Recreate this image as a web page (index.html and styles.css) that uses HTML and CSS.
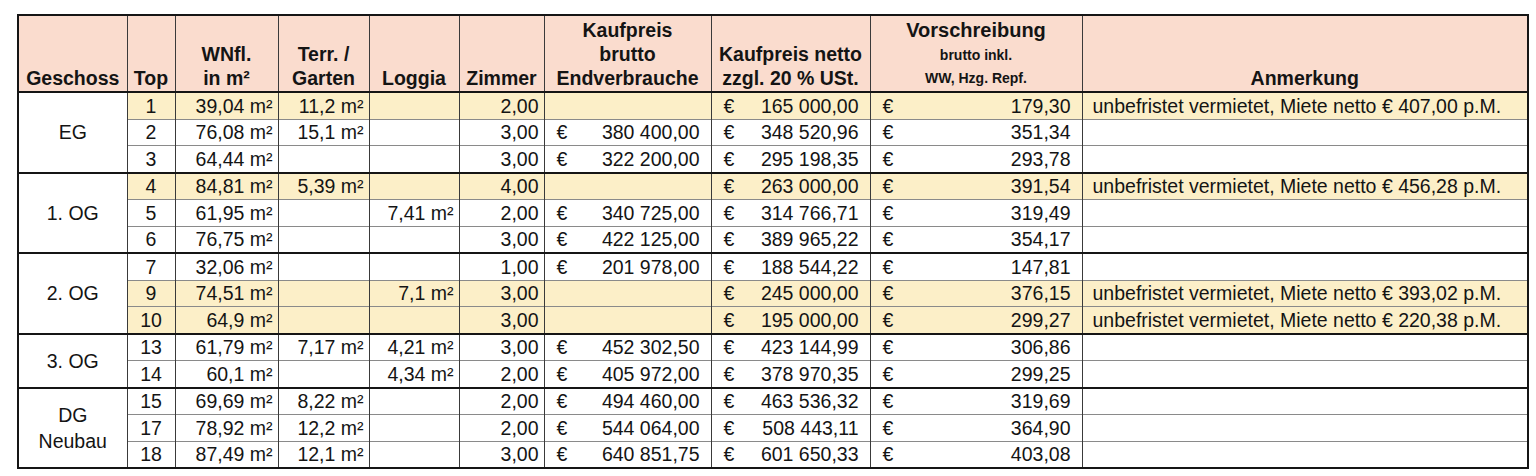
FILE: index.html
```html
<!DOCTYPE html>
<html lang="de">
<head>
<meta charset="utf-8">
<title>Preisliste</title>
<link rel="stylesheet" href="styles.css">
</head>
<body>
<table class="sheet">
  <colgroup>
    <col class="c-floor"><col class="c-top"><col class="c-area"><col class="c-terr"><col class="c-log"><col class="c-rooms"><col class="c-brutto"><col class="c-netto"><col class="c-vor"><col class="c-note">
  </colgroup>
  <thead>
    <tr class="head">
      <th>Geschoss</th>
      <th>Top</th>
      <th>WNfl.<br>in m²</th>
      <th>Terr. /<br>Garten</th>
      <th>Loggia</th>
      <th>Zimmer</th>
      <th>Kaufpreis<br>brutto<br>Endverbrauche</th>
      <th>Kaufpreis netto<br>zzgl. 20 % USt.</th>
      <th class="vor"><span class="big">Vorschreibung</span><span class="small">brutto inkl.</span><span class="small">WW, Hzg. Repf.</span></th>
      <th>Anmerkung</th>
    </tr>
  </thead>
  <tbody class="grp">
    <tr class="hl">
      <td class="floor" rowspan="3">EG</td>
      <td class="top">1</td><td class="num">39,04 m²</td><td class="num">11,2 m²</td><td class="num"></td><td class="num">2,00</td>
      <td></td>
      <td><div class="acc"><span>€</span><span>165 000,00</span></div></td>
      <td><div class="acc"><span>€</span><span>179,30</span></div></td>
      <td class="note">unbefristet vermietet, Miete netto € 407,00 p.M.</td>
    </tr>
    <tr>
      <td class="top">2</td><td class="num">76,08 m²</td><td class="num">15,1 m²</td><td class="num"></td><td class="num">3,00</td>
      <td><div class="acc"><span>€</span><span>380 400,00</span></div></td>
      <td><div class="acc"><span>€</span><span>348 520,96</span></div></td>
      <td><div class="acc"><span>€</span><span>351,34</span></div></td>
      <td class="note"></td>
    </tr>
    <tr>
      <td class="top">3</td><td class="num">64,44 m²</td><td class="num"></td><td class="num"></td><td class="num">3,00</td>
      <td><div class="acc"><span>€</span><span>322 200,00</span></div></td>
      <td><div class="acc"><span>€</span><span>295 198,35</span></div></td>
      <td><div class="acc"><span>€</span><span>293,78</span></div></td>
      <td class="note"></td>
    </tr>
  </tbody>
  <tbody class="grp">
    <tr class="hl">
      <td class="floor" rowspan="3">1. OG</td>
      <td class="top">4</td><td class="num">84,81 m²</td><td class="num">5,39 m²</td><td class="num"></td><td class="num">4,00</td>
      <td></td>
      <td><div class="acc"><span>€</span><span>263 000,00</span></div></td>
      <td><div class="acc"><span>€</span><span>391,54</span></div></td>
      <td class="note">unbefristet vermietet, Miete netto € 456,28 p.M.</td>
    </tr>
    <tr>
      <td class="top">5</td><td class="num">61,95 m²</td><td class="num"></td><td class="num">7,41 m²</td><td class="num">2,00</td>
      <td><div class="acc"><span>€</span><span>340 725,00</span></div></td>
      <td><div class="acc"><span>€</span><span>314 766,71</span></div></td>
      <td><div class="acc"><span>€</span><span>319,49</span></div></td>
      <td class="note"></td>
    </tr>
    <tr>
      <td class="top">6</td><td class="num">76,75 m²</td><td class="num"></td><td class="num"></td><td class="num">3,00</td>
      <td><div class="acc"><span>€</span><span>422 125,00</span></div></td>
      <td><div class="acc"><span>€</span><span>389 965,22</span></div></td>
      <td><div class="acc"><span>€</span><span>354,17</span></div></td>
      <td class="note"></td>
    </tr>
  </tbody>
  <tbody class="grp">
    <tr>
      <td class="floor" rowspan="3">2. OG</td>
      <td class="top">7</td><td class="num">32,06 m²</td><td class="num"></td><td class="num"></td><td class="num">1,00</td>
      <td><div class="acc"><span>€</span><span>201 978,00</span></div></td>
      <td><div class="acc"><span>€</span><span>188 544,22</span></div></td>
      <td><div class="acc"><span>€</span><span>147,81</span></div></td>
      <td class="note"></td>
    </tr>
    <tr class="hl">
      <td class="top">9</td><td class="num">74,51 m²</td><td class="num"></td><td class="num">7,1 m²</td><td class="num">3,00</td>
      <td></td>
      <td><div class="acc"><span>€</span><span>245 000,00</span></div></td>
      <td><div class="acc"><span>€</span><span>376,15</span></div></td>
      <td class="note">unbefristet vermietet, Miete netto € 393,02 p.M.</td>
    </tr>
    <tr class="hl">
      <td class="top">10</td><td class="num">64,9 m²</td><td class="num"></td><td class="num"></td><td class="num">3,00</td>
      <td></td>
      <td><div class="acc"><span>€</span><span>195 000,00</span></div></td>
      <td><div class="acc"><span>€</span><span>299,27</span></div></td>
      <td class="note">unbefristet vermietet, Miete netto € 220,38 p.M.</td>
    </tr>
  </tbody>
  <tbody class="grp">
    <tr>
      <td class="floor" rowspan="2">3. OG</td>
      <td class="top">13</td><td class="num">61,79 m²</td><td class="num">7,17 m²</td><td class="num">4,21 m²</td><td class="num">3,00</td>
      <td><div class="acc"><span>€</span><span>452 302,50</span></div></td>
      <td><div class="acc"><span>€</span><span>423 144,99</span></div></td>
      <td><div class="acc"><span>€</span><span>306,86</span></div></td>
      <td class="note"></td>
    </tr>
    <tr>
      <td class="top">14</td><td class="num">60,1 m²</td><td class="num"></td><td class="num">4,34 m²</td><td class="num">2,00</td>
      <td><div class="acc"><span>€</span><span>405 972,00</span></div></td>
      <td><div class="acc"><span>€</span><span>378 970,35</span></div></td>
      <td><div class="acc"><span>€</span><span>299,25</span></div></td>
      <td class="note"></td>
    </tr>
  </tbody>
  <tbody class="grp">
    <tr>
      <td class="floor" rowspan="3">DG<br>Neubau</td>
      <td class="top">15</td><td class="num">69,69 m²</td><td class="num">8,22 m²</td><td class="num"></td><td class="num">2,00</td>
      <td><div class="acc"><span>€</span><span>494 460,00</span></div></td>
      <td><div class="acc"><span>€</span><span>463 536,32</span></div></td>
      <td><div class="acc"><span>€</span><span>319,69</span></div></td>
      <td class="note"></td>
    </tr>
    <tr>
      <td class="top">17</td><td class="num">78,92 m²</td><td class="num">12,2 m²</td><td class="num"></td><td class="num">2,00</td>
      <td><div class="acc"><span>€</span><span>544 064,00</span></div></td>
      <td><div class="acc"><span>€</span><span>508 443,11</span></div></td>
      <td><div class="acc"><span>€</span><span>364,90</span></div></td>
      <td class="note"></td>
    </tr>
    <tr>
      <td class="top">18</td><td class="num">87,49 m²</td><td class="num">12,1 m²</td><td class="num"></td><td class="num">3,00</td>
      <td><div class="acc"><span>€</span><span>640 851,75</span></div></td>
      <td><div class="acc"><span>€</span><span>601 650,33</span></div></td>
      <td><div class="acc"><span>€</span><span>403,08</span></div></td>
      <td class="note"></td>
    </tr>
  </tbody>
</table>
</body>
</html>
```
FILE: styles.css
```css
html, body {
  margin: 0;
  padding: 0;
  background: #ffffff;
}
body {
  padding: 14px 0 0 17px;
  font-family: "Liberation Sans", Arial, sans-serif;
  color: #141414;
}
.sheet {
  border-collapse: collapse;
  table-layout: fixed;
  width: 1510px;
  border: 2px solid #151515;
  font-size: 19.5px;
}
.c-floor { width: 109px; }
.c-top { width: 48px; }
.c-area { width: 103px; }
.c-terr { width: 91px; }
.c-log { width: 90px; }
.c-rooms { width: 85px; }
.c-brutto { width: 167px; }
.c-netto { width: 159px; }
.c-vor { width: 212px; }
.c-note { width: 446px; }

.head th {
  background: #fadcce;
  height: 74px;
  vertical-align: bottom;
  text-align: center;
  font-weight: bold;
  font-size: 19.5px;
  line-height: 24px;
  padding: 0 2px 1px;
  border-left: 1px solid #3a3a3a;
  border-bottom: 2px solid #151515;
  white-space: nowrap;
}
.head th.vor {
  line-height: 22px;
  padding-bottom: 1px;
}
.big {
  display: block;
  font-size: 20px;
  line-height: 27px;
}
.small {
  display: block;
  font-size: 14px;
  line-height: 23px;
}
td {
  height: 25.5px;
  padding: 0 5px;
  border-left: 1px solid #3a3a3a;
  border-top: 1px solid #8a8a8a;
  white-space: nowrap;
  line-height: 22px;
  vertical-align: middle;
}
.grp tr:first-child td {
  border-top: 2px solid #151515;
}
.hl td {
  background: #fcefc8;
}
.hl td.floor {
  background: #ffffff;
}
td.floor {
  text-align: center;
  line-height: 26px;
}
td.top {
  text-align: center;
}
td.num {
  text-align: right;
}
.acc {
  display: flex;
  justify-content: space-between;
  padding: 0 6px 0 7px;
}
td.note {
  padding-left: 10px;
}
```
